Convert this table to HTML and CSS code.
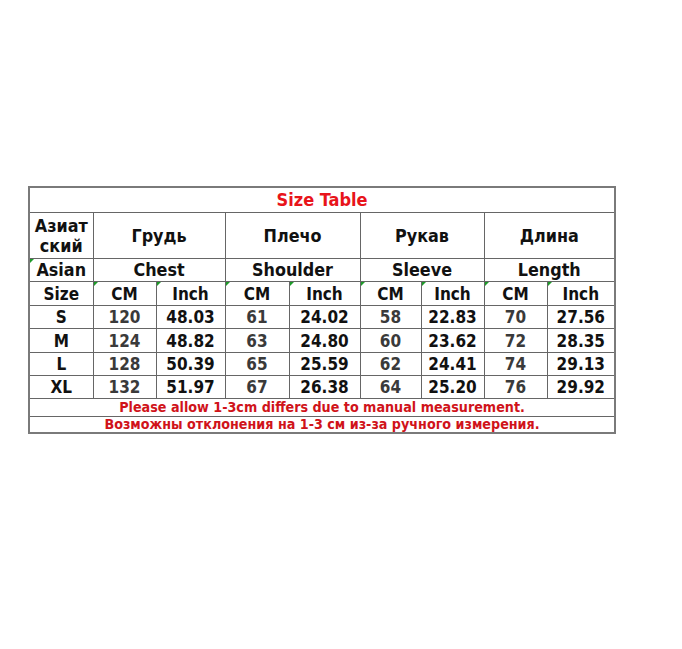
FILE: index.html
```html
<!DOCTYPE html>
<html>
<head>
<meta charset="utf-8">
<link rel="stylesheet" href="styles.css">
</head>
<body>
<table class="sizes">
  <colgroup>
    <col class="c64"><col class="c63"><col class="c69"><col class="c64"><col class="c71"><col class="c61"><col class="c63"><col class="c63"><col class="c68">
  </colgroup>
  <tr class="r-title"><td colspan="9" class="title">Size Table</td></tr>
  <tr class="r-h1">
    <td class="two">Азиат<br>ский</td>
    <td colspan="2">Грудь</td>
    <td colspan="2">Плечо</td>
    <td colspan="2">Рукав</td>
    <td colspan="2">Длина</td>
  </tr>
  <tr class="r-h2">
    <td class="tri">Asian</td>
    <td colspan="2">Chest</td>
    <td colspan="2">Shoulder</td>
    <td colspan="2">Sleeve</td>
    <td colspan="2">Length</td>
  </tr>
  <tr class="r-h3">
    <td>Size</td>
    <td class="tri">CM</td><td class="tri">Inch</td>
    <td class="tri">CM</td><td class="tri">Inch</td>
    <td class="tri">CM</td><td class="tri">Inch</td>
    <td class="tri">CM</td><td class="tri">Inch</td>
  </tr>
  <tr class="r-a">
    <td>S</td><td class="cm">120</td><td>48.03</td><td class="cm">61</td><td>24.02</td><td class="cm">58</td><td>22.83</td><td class="cm">70</td><td>27.56</td>
  </tr>
  <tr class="r-b">
    <td>M</td><td class="cm">124</td><td>48.82</td><td class="cm">63</td><td>24.80</td><td class="cm">60</td><td>23.62</td><td class="cm">72</td><td>28.35</td>
  </tr>
  <tr class="r-a">
    <td>L</td><td class="cm">128</td><td>50.39</td><td class="cm">65</td><td>25.59</td><td class="cm">62</td><td>24.41</td><td class="cm">74</td><td>29.13</td>
  </tr>
  <tr class="r-a">
    <td>XL</td><td class="cm">132</td><td>51.97</td><td class="cm">67</td><td>26.38</td><td class="cm">64</td><td>25.20</td><td class="cm">76</td><td>29.92</td>
  </tr>
  <tr class="r-n1"><td colspan="9" class="note">Please allow 1-3cm differs due to manual measurement.</td></tr>
  <tr class="r-n2"><td colspan="9" class="note">Возможны отклонения на 1-3 см из-за ручного измерения.</td></tr>
</table>
</body>
</html>
```
FILE: styles.css
```css
html, body {
  margin: 0;
  padding: 0;
  background: #ffffff;
}
body {
  padding: 186px 0 0 28px;
}
.sizes {
  border-collapse: collapse;
  table-layout: fixed;
  width: 585px;
  border: 2px solid #7a7a7a;
  font-family: "DejaVu Sans Condensed", "DejaVu Sans", sans-serif;
  font-weight: bold;
  color: #111;
}
.c64 { width: 64px; }
.c63 { width: 63px; }
.c69 { width: 69px; }
.c71 { width: 71px; }
.c61 { width: 61px; }
.c68 { width: 68px; }
.sizes td {
  border: 1px solid #666;
  padding: 0;
  text-align: center;
  vertical-align: middle;
  font-size: 17px;
  line-height: 20px;
  white-space: nowrap;
  overflow: hidden;
}
.r-h1 td, .r-h2 td { font-size: 17.8px; }
.r-title td { height: 24px; }
.r-h1 td { height: 45px; }
.r-h2 td { height: 22px; }
.r-h3 td { height: 23px; }
.r-a td { height: 22px; }
.r-b td { height: 23px; }
.r-n1 td { height: 17px; }
.r-n2 td { height: 15px; }
.sizes td.title {
  color: #e8141a;
  font-size: 18px;
}
.sizes td.cm { color: #3a3a3a; }
.sizes td.note {
  color: #d0131a;
  font-size: 14.2px;
  line-height: 15px;
}
.sizes td.tri { position: relative; }
.sizes td.tri::before {
  content: "";
  position: absolute;
  left: 0;
  top: 0;
  width: 0;
  height: 0;
  border-top: 4px solid #1e9b2a;
  border-right: 4px solid transparent;
}
```
